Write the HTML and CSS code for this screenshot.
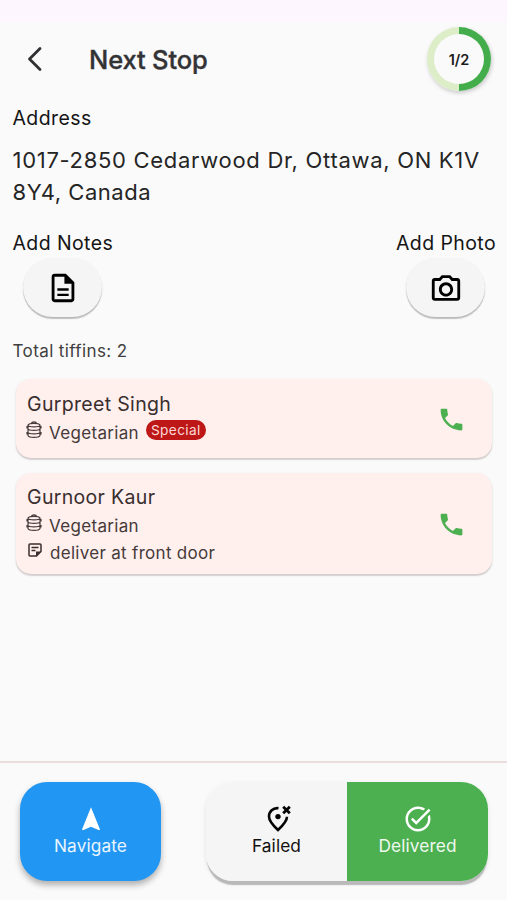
FILE: index.html
```html
<!DOCTYPE html>
<html lang="en">
<head>
<meta charset="utf-8">
<title>Next Stop</title>
<link rel="stylesheet" href="styles.css">
</head>
<body>
<div class="status-bar"></div>
<header class="header">
  <svg class="back" width="16" height="26" viewBox="0 0 16 26"><path d="M13 2.500 2.500 13 13 23.500"/></svg>
  <h1 class="title">Next Stop</h1>
  <div class="progress"><span class="progress-label">1/2</span></div>
</header>
<main class="content">
  <h2 class="label">Address</h2>
  <p class="address"><span class="street">1017-2850 Cedarwood Dr, Ottawa, ON K1V</span><br>8Y4, Canada</p>
  <div class="actions">
    <div class="action">
      <span class="label">Add Notes</span>
      <button class="pill" aria-label="Add Notes">
        <svg width="34" height="34" viewBox="0 0 24 24"><path d="M8 16h8v1.700H8zm0-3.800h8v1.700H8zM14 2H6c-1.100 0-2 .9-2 2v16c0 1.100.89 2 1.990 2H18c1.100 0 2-.9 2-2V8l-6-6zm4 18H6V4h7v5h5v11z"/></svg>
      </button>
    </div>
    <div class="action action-right">
      <span class="label">Add Photo</span>
      <button class="pill" aria-label="Add Photo">
        <svg width="34" height="34" viewBox="0 0 24 24"><path d="M20 5h-3.170L15 3H9L7.170 5H4c-1.100 0-2 .9-2 2v12c0 1.100.9 2 2 2h16c1.100 0 2-.9 2-2V7c0-1.100-.9-2-2-2zm0 14H4V7h4.050l1.830-2h4.240l1.830 2H20v12zM12 8c-2.760 0-5 2.240-5 5s2.240 5 5 5 5-2.240 5-5-2.240-5-5-5zm0 8c-1.650 0-3-1.350-3-3s1.350-3 3-3 3 1.350 3 3-1.350 3-3 3z"/></svg>
      </button>
    </div>
  </div>
  <p class="total">Total tiffins: 2</p>
  <section class="card">
    <div class="card-body">
      <h3 class="name">Gurpreet Singh</h3>
      <div class="row">
        <svg class="tiffin" width="16" height="18" viewBox="0 0 16 18"><path d="M5.500 2C6 .5 10 .5 10.500 2M2 4c1-2.300 11-2.300 12 0v10.500c-1 2.500-11 2.500-12 0zM2 4.500c1 1.800 11 1.800 12 0M2 8c1 1.800 11 1.800 12 0M2 11.500c1 1.800 11 1.800 12 0M1 5v2.500M15 5v2.500M1 11v2.500M15 11v2.500"/></svg>
        <span class="diet">Vegetarian</span>
        <span class="badge">Special</span>
      </div>
    </div>
    <svg class="phone" width="29" height="29" viewBox="0 0 24 24"><path d="M6.620 10.790c1.440 2.830 3.760 5.140 6.590 6.590l2.200-2.200c.27-.27.67-.36 1.020-.24 1.120.37 2.330.57 3.570.57.55 0 1 .45 1 1V20c0 .55-.45 1-1 1-9.390 0-17-7.610-17-17 0-.55.45-1 1-1h3.500c.55 0 1 .45 1 1 0 1.250.2 2.450.57 3.570.11.35.03.74-.25 1.020l-2.200 2.200z"/></svg>
  </section>
  <section class="card card-tall">
    <div class="card-body">
      <h3 class="name">Gurnoor Kaur</h3>
      <div class="row">
        <svg class="tiffin" width="16" height="18" viewBox="0 0 16 18"><path d="M5.500 2C6 .5 10 .5 10.500 2M2 4c1-2.300 11-2.300 12 0v10.500c-1 2.500-11 2.500-12 0zM2 4.500c1 1.800 11 1.800 12 0M2 8c1 1.800 11 1.800 12 0M2 11.500c1 1.800 11 1.800 12 0M1 5v2.500M15 5v2.500M1 11v2.500M15 11v2.500"/></svg>
        <span class="diet">Vegetarian</span>
      </div>
      <div class="row">
        <svg class="note" width="14" height="14" viewBox="0 0 14 14"><path class="note-line" d="M2 1h10q1 0 1 1v6.500L8.500 13H2q-1 0-1-1V2q0-1 1-1zM3.500 4.500h7M3.500 7.500h4"/><path d="M8 8.500h5L8 13.500z"/></svg>
        <span class="instruction">deliver at front door</span>
      </div>
    </div>
    <svg class="phone" width="29" height="29" viewBox="0 0 24 24"><path d="M6.620 10.790c1.440 2.830 3.760 5.140 6.590 6.590l2.200-2.200c.27-.27.67-.36 1.020-.24 1.120.37 2.330.57 3.570.57.55 0 1 .45 1 1V20c0 .55-.45 1-1 1-9.390 0-17-7.610-17-17 0-.55.45-1 1-1h3.500c.55 0 1 .45 1 1 0 1.250.2 2.450.57 3.570.11.35.03.74-.25 1.020l-2.200 2.200z"/></svg>
  </section>
</main>
<footer class="footer">
  <button class="btn navigate">
    <svg width="30" height="30" viewBox="0 0 24 24"><path d="M12 2.500 4.800 20.300l.7.700 6.500-2.900 6.500 2.900.7-.7z"/></svg>
    <span>Navigate</span>
  </button>
  <div class="split">
    <button class="btn failed">
      <svg width="30" height="30" viewBox="0 0 30 30"><path class="stroke" d="M16.500 4.200C11 3.500 7 7.700 7 12.500c0 4.200 3.300 8.200 9 13.500 5.700-5.300 9-9.300 9-13.200"/><path class="stroke cross" d="M21.200 2.700l6.600 6.600m0-6.600-6.600 6.600"/><circle cx="16" cy="12.600" r="2.700"/></svg>
      <span>Failed</span>
    </button>
    <button class="btn delivered">
      <svg width="30" height="30" viewBox="0 0 24 24"><path d="M22 5.180 10.590 16.600l-4.240-4.240 1.410-1.410 2.830 2.830 10-10L22 5.180zM19.790 10.220C19.920 10.790 20 11.390 20 12c0 4.420-3.580 8-8 8s-8-3.580-8-8 3.580-8 8-8c1.580 0 3.040.46 4.280 1.250l1.440-1.440C16.100 2.670 14.130 2 12 2 6.480 2 2 6.480 2 12s4.480 10 10 10 10-4.480 10-10c0-1.190-.22-2.330-.6-3.390l-1.610 1.610z"/></svg>
      <span>Delivered</span>
    </button>
  </div>
</footer>
</body>
</html>
```
FILE: styles.css
```css
* { box-sizing: border-box; margin: 0; padding: 0; }
body {
  width: 507px;
  height: 900px;
  overflow: hidden;
  display: flex;
  flex-direction: column;
  background: #fafafa;
  color: #1c1c1c;
  font-family: Inter, "Liberation Sans", sans-serif;
  white-space: nowrap;
}
button { border: 0; font: inherit; color: inherit; }
svg { display: block; flex: none; }
.status-bar { height: 24px; background: linear-gradient(#fef6fe 85%, #fafafa); flex: none; }
.header { height: 76px; padding: 0 16px 6px 27px; display: flex; align-items: center; flex: none; }
.back { fill: none; stroke: #303033; stroke-width: 2.8; stroke-linecap: round; stroke-linejoin: round; }
.title { margin: 2px 0 0 46px; font-size: 25.500px; font-weight: 500; line-height: 32px; letter-spacing: -.15px; color: #333336; -webkit-text-stroke: .35px #333336; }
.progress {
  width: 64px; height: 64px; margin-left: auto; padding: 7px; border-radius: 50%;
  background: conic-gradient(#43ad4c 50%, #dcedc8 0);
  box-shadow: 1px 2px 4px rgba(0, 0, 0, .2);
}
.progress-label {
  height: 50px; border-radius: 50%; background: #fafafa; display: flex; align-items: center; justify-content: center;
  font-size: 14.500px; font-weight: 600;
}
.content { padding: 0 11px 0 12.500px; flex: 1; }
.label { display: block; font-size: 19.500px; font-weight: 400; line-height: 24px; letter-spacing: .4px; color: #151515; }
.content > .label { margin-top: 6px; }
.address { margin-top: 14px; font-size: 22px; line-height: 32px; letter-spacing: .55px; color: #252525; }
.street { letter-spacing: .7px; }
.actions { display: flex; justify-content: space-between; margin-top: 23px; }
.action { display: flex; flex-direction: column; }
.action-right { align-items: flex-end; }
.pill {
  width: 79px; height: 59px; margin: 3px 11px 0 10.500px; border-radius: 30px; background: #f5f5f5;
  display: flex; align-items: center; justify-content: center;
  box-shadow: 0 2px 1px rgba(0, 0, 0, .2), 0 1px 2px rgba(0, 0, 0, .1);
}
.total { margin-top: 24px; font-size: 17px; line-height: 20px; letter-spacing: .4px; color: #404040; }
.card {
  height: 79px; margin: 18px 4px 0 3.500px; padding: 13px 26px 0 11px; border-radius: 15px; background: #ffefed;
  display: flex; justify-content: space-between;
  box-shadow: 0 2px 1px rgba(80, 50, 50, .15), 0 1px 3px rgba(0, 0, 0, .1);
}
.card-tall { height: 101px; margin-top: 15px; padding-top: 12px; }
.name { font-size: 19.500px; font-weight: 400; line-height: 25px; letter-spacing: .33px; color: #392e2e; }
.row { display: flex; height: 27px; line-height: 27px; color: #453a3a; font-size: 17px; }
.name + .row { margin-top: 3px; }
.tiffin { margin: 1px 7px 0 -1px; fill: none; stroke: #463b3b; stroke-width: 1.2; }
.diet { letter-spacing: .33px; }
.instruction { letter-spacing: .3px; }
.badge { height: 20px; margin: 0 0 0 7px; padding: 0 5px; border-radius: 10px; background: #bd1717; color: #fbd9d5; font-size: 13.700px; line-height: 20px; letter-spacing: .35px; }
.note { margin: 3px 8px 0 1px; fill: #392e2e; }
.note-line { fill: none; stroke: #392e2e; stroke-width: 1.500; }
.phone { align-self: center; margin-top: -12px; fill: #4caf50; }
.card-tall .phone { margin-top: -11px; }
.footer { height: 139px; padding: 19px 19px 0 20px; border-top: 2px solid #eadddd; display: flex; justify-content: space-between; flex: none; }
.btn { width: 141px; height: 99px; padding-top: 22px; display: flex; flex-direction: column; align-items: center; font-size: 17.300px; line-height: 24px; letter-spacing: .1px; }
.navigate { border-radius: 27px; background: #2196f3; color: #e9f5ff; fill: #fff; box-shadow: 0 4px 6px rgba(0, 0, 0, .3); }
.split { width: 282px; height: 99px; display: flex; border-radius: 27px; overflow: hidden; box-shadow: 0 5px 1px -1px #b9b9b9, 0 2px 5px rgba(0, 0, 0, .1); }
.failed { background: #f5f5f5; color: #111; }
.delivered { background: #4caf50; color: #eff9ef; fill: #fff; }
.stroke { fill: none; stroke: #050505; stroke-width: 2.6; }
.cross { stroke-width: 2.8; }
```
